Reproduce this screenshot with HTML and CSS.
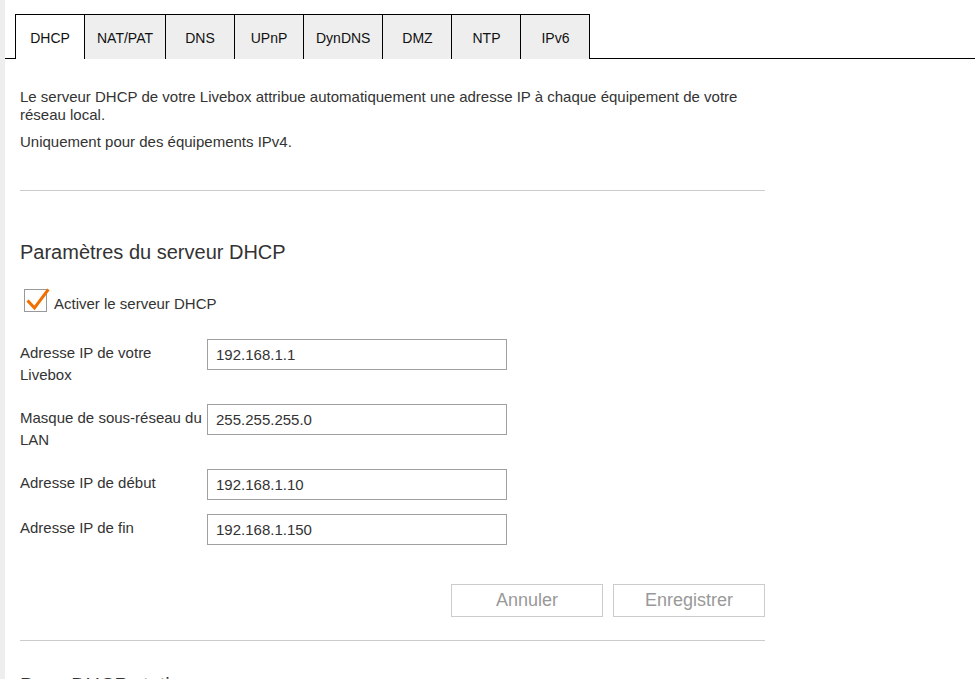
FILE: index.html
```html
<!DOCTYPE html>
<html lang="fr">
<head>
<meta charset="utf-8">
<title>DHCP</title>
<link rel="stylesheet" href="styles.css">
</head>
<body>
<div class="page">
  <div class="strip"></div>
  <div class="main">
    <nav class="tabs">
      <span class="tab-lead"></span>
      <a class="tab tab-first active">DHCP</a>
      <a class="tab">NAT/PAT</a>
      <a class="tab">DNS</a>
      <a class="tab">UPnP</a>
      <a class="tab">DynDNS</a>
      <a class="tab">DMZ</a>
      <a class="tab">NTP</a>
      <a class="tab">IPv6</a>
      <span class="tab-fill"></span>
    </nav>
    <div class="content">
      <p class="intro">Le serveur DHCP de votre Livebox attribue automatiquement une adresse IP à chaque équipement de votre réseau local.</p>
      <p class="intro">Uniquement pour des équipements IPv4.</p>
      <hr class="sep sep-top">
      <h2 class="title">Paramètres du serveur DHCP</h2>
      <label class="check-row">
        <span class="check-box">
          <svg class="check-mark" width="26" height="26" viewBox="0 0 26 26"><polyline points="3.5,13.5 9.5,20 22.5,2.5" fill="none" stroke="#f16e00" stroke-width="3" stroke-linecap="square"/></svg>
        </span>
        <span class="check-label">Activer le serveur DHCP</span>
      </label>
      <div class="form">
        <div class="row">
          <div class="label">Adresse IP de votre Livebox</div>
          <div class="field">192.168.1.1</div>
        </div>
        <div class="row">
          <div class="label">Masque de sous-réseau du LAN</div>
          <div class="field">255.255.255.0</div>
        </div>
        <div class="row">
          <div class="label">Adresse IP de début</div>
          <div class="field">192.168.1.10</div>
        </div>
        <div class="row">
          <div class="label">Adresse IP de fin</div>
          <div class="field">192.168.1.150</div>
        </div>
      </div>
      <div class="actions">
        <button class="btn">Annuler</button>
        <button class="btn">Enregistrer</button>
      </div>
      <hr class="sep sep-bottom">
      <h2 class="title title-next">Baux DHCP statiques</h2>
    </div>
  </div>
</div>
</body>
</html>
```
FILE: styles.css
```css
html, body {
  margin: 0;
  padding: 0;
  background: #fff;
  font-family: "Liberation Sans", Arial, sans-serif;
  color: #333;
}
.page {
  display: flex;
  min-height: 679px;
}
.strip {
  width: 5px;
  background: #eeeeee;
  flex: none;
}
.main {
  flex: 1;
  min-width: 0;
}
.tabs {
  display: flex;
  margin-top: 14px;
  height: 45px;
}
.tab-lead {
  width: 10px;
  height: 44px;
  border-bottom: 1px solid #000;
  flex: none;
}
.tab-fill {
  flex: 1;
  height: 44px;
  border-bottom: 1px solid #000;
}
.tab {
  display: flex;
  align-items: center;
  justify-content: center;
  min-width: 69px;
  height: 45px;
  padding: 2px 12px 0;
  box-sizing: border-box;
  border-top: 1px solid #000;
  border-right: 1px solid #000;
  background: #eeeeee;
  font-size: 14px;
  color: #111;
  flex: none;
}
.tab-first {
  border-left: 1px solid #000;
  min-width: 70px;
}
.tab.active {
  background: #fff;
}
.content {
  width: 745px;
  padding: 29px 0 0 15px;
}
.intro {
  margin: 0 0 9px;
  font-size: 15px;
  line-height: 18px;
}
.sep {
  border: 0;
  border-top: 1px solid #cccccc;
  height: 0;
  margin: 0;
}
.sep-top {
  margin-top: 39px;
}
.title {
  margin: 49px 0 0;
  font-size: 20px;
  font-weight: normal;
  line-height: 24px;
  color: #333;
}
.title-next {
  margin-top: 32px;
}
.check-row {
  display: flex;
  align-items: center;
  margin-top: 24px;
  margin-left: 4px;
}
.check-box {
  position: relative;
  width: 21px;
  height: 21px;
  border: 1px solid #999;
  flex: none;
}
.check-mark {
  position: absolute;
  left: 0;
  top: -2px;
}
.check-label {
  margin-left: 7px;
  font-size: 15px;
  line-height: 18px;
  padding-top: 7px;
}
.form {
  margin-top: 26px;
}
.row {
  display: grid;
  grid-template-columns: 187px 300px;
  align-items: start;
  margin-bottom: 14px;
}
.label {
  font-size: 15px;
  line-height: 22px;
  padding: 3px 0 4px;
}
.field {
  height: 31px;
  box-sizing: border-box;
  border: 1px solid #a0a0a0;
  padding: 0 8px;
  font-size: 15px;
  line-height: 29px;
  color: #333;
}
.actions {
  display: flex;
  justify-content: flex-end;
  gap: 10px;
  margin-top: 39px;
}
.btn {
  width: 152px;
  height: 33px;
  border: 1px solid #cccccc;
  background: #fff;
  color: #999;
  font-family: "Liberation Sans", Arial, sans-serif;
  font-size: 18px;
  padding: 0;
}
.sep-bottom {
  margin-top: 23px;
}
```
